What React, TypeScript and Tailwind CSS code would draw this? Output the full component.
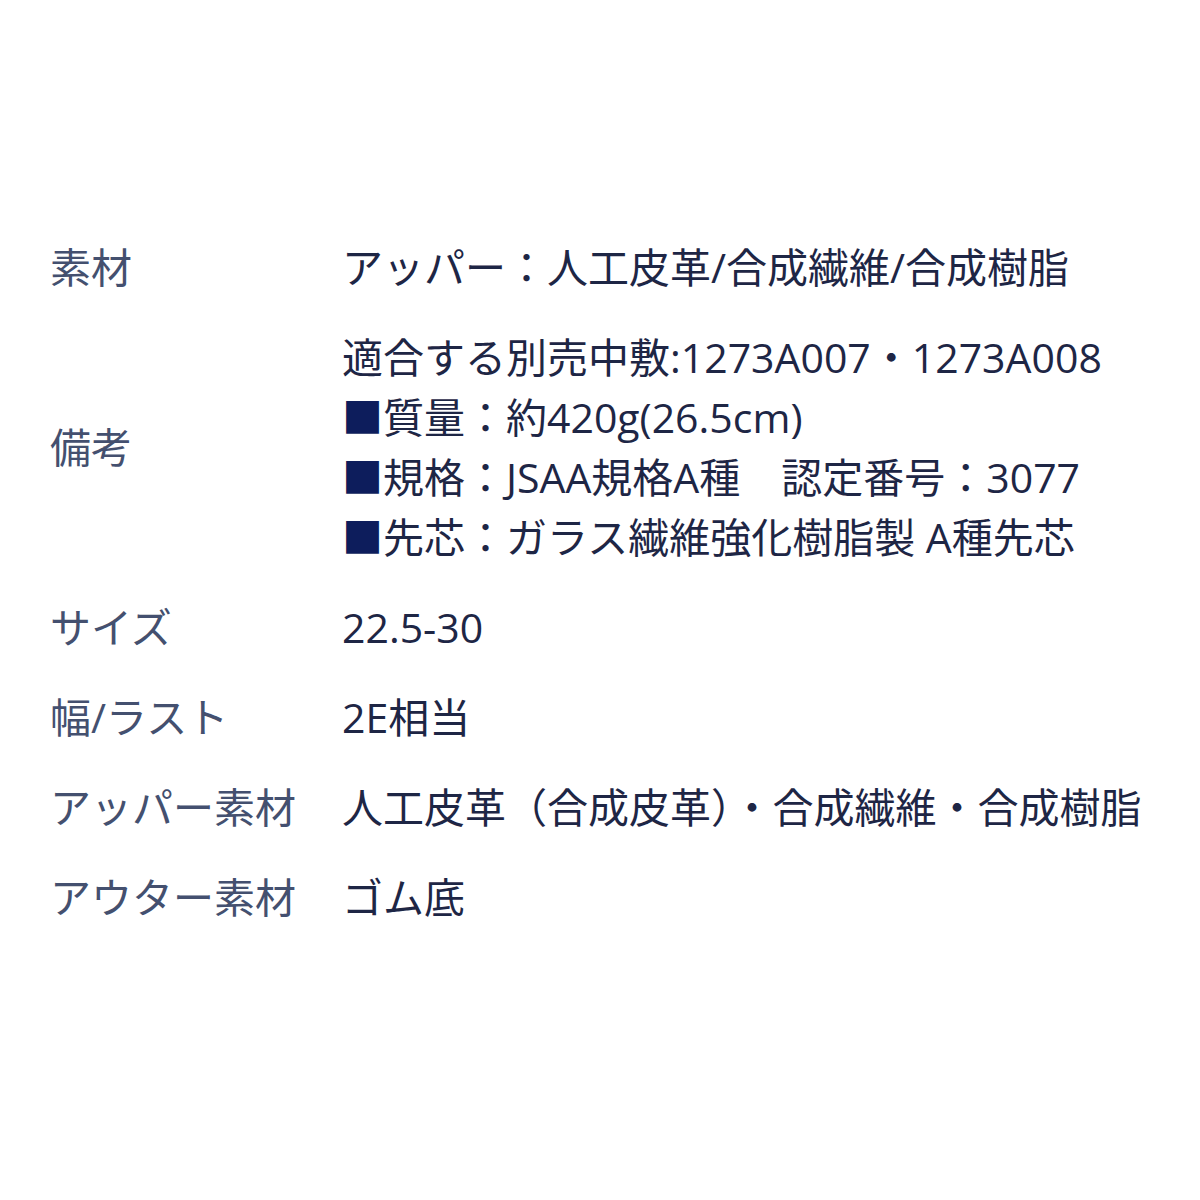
const rows: { label: string; lines: string[] }[] = [
  { label: '素材', lines: ['アッパー：人工皮革/合成繊維/合成樹脂'] },
  {
    label: '備考',
    lines: [
      '適合する別売中敷:1273A007・1273A008',
      '■質量：約420g(26.5cm)',
      '■規格：JSAA規格A種　認定番号：3077',
      '■先芯：ガラス繊維強化樹脂製 A種先芯',
    ],
  },
  { label: 'サイズ', lines: ['22.5-30'] },
  { label: '幅/ラスト', lines: ['2E相当'] },
  { label: 'アッパー素材', lines: ['人工皮革（合成皮革）・合成繊維・合成樹脂'] },
  { label: 'アウター素材', lines: ['ゴム底'] },
];

function Line({ text }: { text: string }) {
  if (text.startsWith('■')) {
    return (
      <div>
        <span className="text-[#0d1d5c]">■</span>
        {text.slice(1)}
      </div>
    );
  }
  return <div>{text}</div>;
}

export default function App() {
  return (
    <div
      className="w-[1200px] h-[1200px] bg-white pt-[237px] pl-[50px] text-[41px] leading-[60px]"
      style={{ fontFamily: '"Open Sans", "Noto Sans CJK JP", sans-serif' }}
    >
      <div className="flex flex-col gap-[30px]">
        {rows.map((row) => (
          <div key={row.label} className="flex items-center">
            <div className="w-[292px] shrink-0 text-[#44506f] whitespace-nowrap">{row.label}</div>
            <div className="text-[#1e2645] whitespace-nowrap">
              {row.lines.map((l) => (
                <Line key={l} text={l} />
              ))}
            </div>
          </div>
        ))}
      </div>
    </div>
  );
}
